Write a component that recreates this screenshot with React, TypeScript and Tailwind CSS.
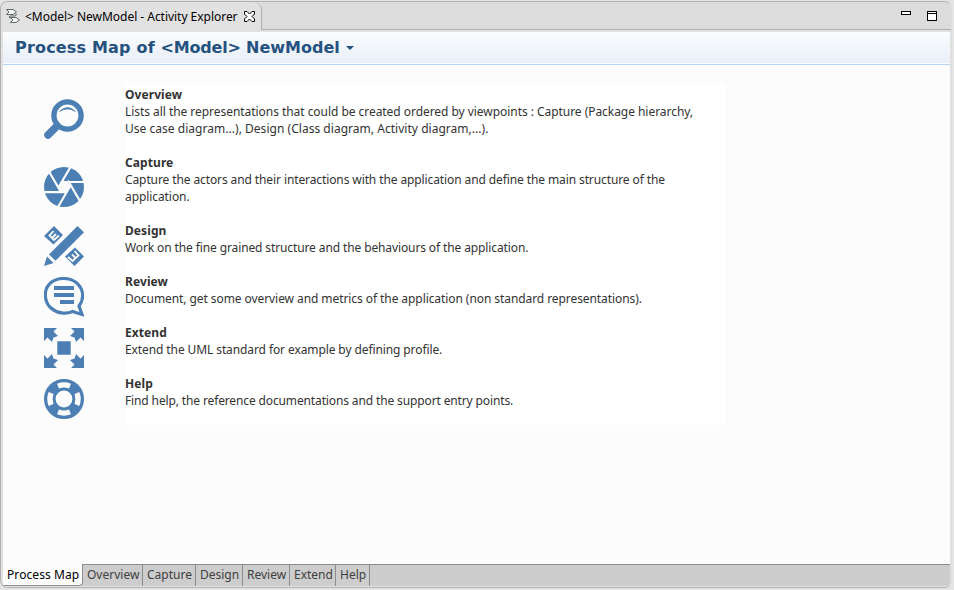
import React from "react";

const Magnifier = () => (
  <svg width="40" height="40" viewBox="0 0 40 40" fill="none" stroke="#4c7fb4">
    <circle cx="23.5" cy="16.500" r="13.600" strokeWidth="5.400" />
    <path d="M4 36 L13 27" strokeWidth="7.500" strokeLinecap="round" />
    <path d="M15.500 12.500 Q23.500 4.500 31.500 12.500 Q23.500 7.500 15.500 12.500Z" fill="#4c7fb4" strokeWidth=".6" />
  </svg>
);

const Aperture = () => (
  <svg width="40" height="40" viewBox="0 0 40 40">
    <circle cx="20" cy="20" r="20" fill="#4c7fb4" />
    <path d="M14 20 L17 14.500 L23.500 14.500 L26.500 20 L23 26 L17 26Z" fill="#fcfcfc" />
    <g stroke="#fcfcfc" strokeWidth="2.200">
      <path d="M26.500 0 L14.500 20.500 M41 15 H17 M36.500 35 L24 13.500 M14 40 L26.500 18.500 M-1 25.200 H23 M5 4.500 L17.500 26" />
    </g>
  </svg>
);

const PencilRuler = () => (
  <svg width="40" height="40" viewBox="0 0 40 40" fill="#4c7fb4">
    <path d="M0 10 L10 0 L19 9 L9.500 18.500Z M31 21.500 L40 30.500 L30.500 40 L21 30.500Z" />
    <path d="M9.500 5 L5.500 9.500 L10 14 L15 9.500 M8 12 L12 8" fill="none" stroke="#fcfcfc" strokeWidth="1.800" />
    <path d="M24 31 L28.500 35 L34.500 29.500 L30.500 25 M28 28.500 L31.500 32" fill="none" stroke="#fcfcfc" strokeWidth="1.800" />
    <path d="M5 28.500 L33.500 0 L40 6.200 L11.500 34.800Z" />
    <path d="M3 30.500 L9.500 37 L0 40Z" />
  </svg>
);

const Bubble = () => (
  <svg width="40" height="40" viewBox="0 0 40 40">
    <path
      d="M35 29 C41 21 39.500 11 31.500 5 C24 -.2 12 .2 5.500 7 C-.5 13 0 25 7 31 C13 36.500 22 37.500 28.500 34.500 L38 37.500Z"
      fill="none" stroke="#4c7fb4" strokeWidth="3.200"
    />
    <path d="M10 9 H30 V13 H10Z M10 16 H30 V20 H10Z M16 23 H30 V27 H16Z" fill="#4c7fb4" />
  </svg>
);

const Arrows = () => (
  <svg width="40" height="40" viewBox="0 0 40 40" fill="#4c7fb4">
    {[0, 90, 180, 270].map((a) => (
      <path key={a} transform={`rotate(${a} 20 20)`} d="M0 0 H13 L9.500 3.500 L14 8 L9.500 9.500 L8 14 L3.500 9.500 L0 13Z" />
    ))}
    <path d="M13.500 13.500 H26.500 V26.500 H13.500Z" stroke="#7fa4ca" />
  </svg>
);

const Lifebuoy = () => (
  <svg width="40" height="40" viewBox="0 0 40 40">
    <circle cx="20" cy="20" r="14.200" fill="none" stroke="#4c7fb4" strokeWidth="11.600" />
    {[0, 90, 180, 270].map((a) => (
      <path key={a} transform={`rotate(${a} 20 20)`} d="M13 4.700 Q20 1.800 27 4.700 L25 9.500 Q20 7.700 15 9.500Z" fill="#fcfcfc" />
    ))}
  </svg>
);

const activities = [
  { name: "Overview", icon: Magnifier, h: "h-[68px]", pad: "pt-[15px]", lines: [
    { text: "Lists all the representations that could be created ordered by viewpoints : Capture (Package hierarchy,", track: "tracking-[-0.046px]" },
    { text: "Use case diagram...), Design (Class diagram, Activity diagram,...).", track: "tracking-[0.03px]" },
  ] },
  { name: "Capture", icon: Aperture, h: "h-[68px]", pad: "pt-[15px]", lines: [
    { text: "Capture the actors and their interactions with the application and define the main structure of the", track: "tracking-[-0.105px]" },
    { text: "application.", track: "tracking-[-0.08px]" },
  ] },
  { name: "Design", icon: PencilRuler, h: "h-[51px]", pad: "pt-1.5", lines: [{ text: "Work on the fine grained structure and the behaviours of the application.", track: "tracking-[-0.115px]" }] },
  { name: "Review", icon: Bubble, h: "h-[51px]", pad: "pt-1.5", lines: [{ text: "Document, get some overview and metrics of the application (non standard representations).", track: "tracking-[-0.075px]" }] },
  { name: "Extend", icon: Arrows, h: "h-[51px]", pad: "pt-1.5", lines: [{ text: "Extend the UML standard for example by defining profile.", track: "tracking-[-0.1px]" }] },
  { name: "Help", icon: Lifebuoy, h: "h-[51px]", pad: "pt-1.5", lines: [{ text: "Find help, the reference documentations and the support entry points.", track: "tracking-[-0.13px]" }] },
];

const pages = [
  { name: "Overview", w: "w-[60px]" },
  { name: "Capture", w: "w-[53px]" },
  { name: "Design", w: "w-[47px]" },
  { name: "Review", w: "w-[47px]" },
  { name: "Extend", w: "w-[46px]" },
  { name: "Help", w: "w-[34px]" },
];

export default function App() {
  return (
    <div className="h-[590px] w-[954px] bg-[#e4e4e4] pt-px font-['Noto_Sans',sans-serif] text-[12px] text-[#333333]">
      <div className="flex h-[587px] w-[952px] flex-col overflow-hidden rounded-lg border border-[#b0b0b0] border-r-[#dedede] bg-[#e1e1e1]">
        <div className="flex h-[28px] shrink-0">
          <div className="flex w-[261px] shrink-0 items-center rounded-tr-lg border-r border-[#b0b0b0] bg-[#e1e1e1] pl-[5px] text-black">
            <svg width="15" height="15" viewBox="0 0 15 15" fill="#f5f5f5" stroke="#555b5e" strokeWidth=".9" className="mr-1 shrink-0">
              <path d="M.5 .5 H7 L10.500 3 L7 5.500 H.5 L3 3Z M4.500 8.500 H10 L13.500 11 L10 13.500 H4.500 L7 11Z" />
              <path d="M9.500 4.500 L10.500 6 L9 7 H4 L3 8 L4.500 9.500" fill="none" />
            </svg>
            <span className="w-[212px] pt-px tracking-[-0.03px] whitespace-nowrap">&lt;Model&gt; NewModel - Activity Explorer</span>
            <svg width="11" height="11" viewBox="0 0 11 11" fill="#fff" stroke="#000" className="ml-[7px] shrink-0">
              <path d="M.5 .5 H3 L5.500 3 L8 .5 H10.500 V3 L8 5.500 L10.500 8 V10.500 H8 L5.500 8 L3 10.500 H.5 V8 L3 5.500 L.5 3Z" />
            </svg>
          </div>
          <div className="flex flex-1 items-start justify-end gap-4 border-b border-[#b0b0b0] bg-[#dcdcdc] pr-[14px] pt-[9px]">
            <div className="h-1 w-[10px] border border-black bg-white" />
            <div className="h-[10px] w-[10px] border border-black bg-white"><div className="mt-px h-px bg-black" /></div>
          </div>
        </div>
        <div className="mt-[2px] ml-[2px] flex w-[947px] flex-1 flex-col bg-[#fcfcfc]">
          <div className="flex h-[33px] shrink-0 flex-col border-b border-[#b5d5f5]">
            <div className="flex h-[31px] items-center bg-linear-to-b from-[#fbfcfd] to-[#e8eff9] pl-3 font-['DejaVu_Sans',sans-serif] text-[16px] font-bold text-[#25517f]">
              <span className="w-[325px] whitespace-pre">
                <span className="tracking-[0.18px]">{"Process Map of "}</span>
                <span className="tracking-[-0.2px]">{"<Model> "}</span>
                <span>NewModel</span>
              </span>
              <svg width="8" height="4" viewBox="0 0 8 4" className="ml-[6px]"><path d="M0 0 H8 L4 4Z" fill="#25517f" /></svg>
            </div>
          </div>
          <div className="flex flex-1 pl-[41px] pt-[19px]">
            <div className="w-[81px] shrink-0">
              {activities.map(({ name, icon: Icon, h, pad }) => (
                <div key={name} className={`${h} ${pad}`}><Icon /></div>
              ))}
            </div>
            <div className="h-[341px] w-[600px] bg-white pt-[2px]">
              {activities.map(({ name, h, lines }) => (
                <div key={name} className={`${h} leading-[17px]`}>
                  <div className="font-bold tracking-[0.08px]">{name}</div>
                  {lines.map(({ text, track }) => <div key={text} className={`${track} whitespace-nowrap`}>{text}</div>)}
                </div>
              ))}
            </div>
          </div>
          <div className="flex h-[22px] shrink-0 bg-[#cdcdcd] leading-[20px]">
            <div className="w-[80px] rounded-br border-b border-r border-[#8c8c8c] bg-[#fcfcfc] pl-1 pt-px tracking-[0.08px] whitespace-nowrap text-black">Process Map</div>
            {pages.map(({ name, w }) => (
              <div key={name} className={`${w} border-r border-t border-[#8c8c8c] pl-1 text-[#404040]`}>{name}</div>
            ))}
            <div className="flex-1 border-t border-[#8c8c8c]" />
          </div>
          <div className="h-px shrink-0 bg-[#e4e4e4]" />
        </div>
      </div>
    </div>
  );
}
